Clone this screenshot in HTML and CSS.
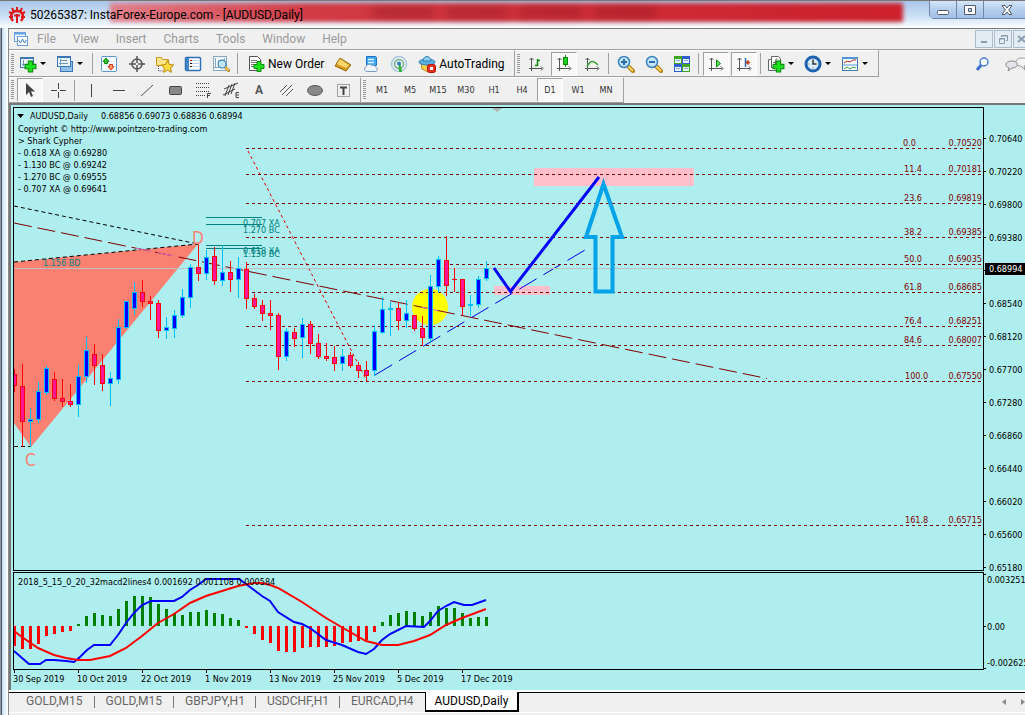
FILE: index.html
```html
<!DOCTYPE html>
<html lang="en">
<head>
    <meta charset="UTF-8">
    <meta name="viewport" content="width=device-width, initial-scale=1.0">
    <title>50265387: InstaForex-Europe.com - [AUDUSD,Daily]</title>
    <link rel="stylesheet" href="styles.css">
</head>
<body>
    <!-- Shared icon parts -->
    <svg class="defs" width="0" height="0">
        <symbol id="plus" viewBox="0 0 12 12">
            <path d="M4 1h4v3h3v4H8v3H4V8H1V4h3z" fill="#1fe01f" stroke="#0a8a0a"/>
        </symbol>
        <symbol id="lens" viewBox="0 0 18 18">
            <path d="M11 11l5 5" stroke="#a87a10" stroke-width="4" stroke-linecap="round"/>
            <path d="M11.500 11.500l4 4" stroke="#ffd75a" stroke-width="2" stroke-linecap="round"/>
            <circle cx="7" cy="7" r="5.500" fill="#c4e4f8" stroke="#3b82bd" stroke-width="1.500"/>
        </symbol>
        <symbol id="axes" viewBox="0 0 18 18">
            <path d="M4.500 16V3M2 13.500h13M2.500 5l2-2 2 2M14 11.500l2 2-2 2" fill="none" stroke="#555"/>
        </symbol>
    </svg>

    <div class="window">
        <header class="titlebar">
            <div class="glass"><i></i><i></i><i></i><i></i></div>
            <svg class="logo" width="18" height="18" viewBox="0 0 18 18">
                <path d="M5 15C1.500 11 3 5 9 5s7.500 6 4 10" fill="none" stroke="#e01a1a" stroke-width="2.500"/>
                <path d="M9 1v5M4 2l2 4M14 2l-2 4M1 6l4 2M17 6l-4 2M1 11h4M17 11h-4" stroke="#e01a1a" stroke-width="2"/>
                <path d="M9 8v9M6 9.500h6" stroke="#e01a1a" stroke-width="2"/>
            </svg>
            <h1>50265387: InstaForex-Europe.com - [AUDUSD,Daily]</h1>
            <div class="window-buttons">
                <button aria-label="Minimize"><svg width="14" height="12"><rect x="1.500" y="6.500" width="11" height="4" rx="1" fill="#fff" stroke="#555b66"/></svg></button>
                <button aria-label="Maximize"><svg width="14" height="12"><path d="M1.500 1.500h11v9h-11z M5.500 4.500h3v3h-3z" fill="#fff" fill-rule="evenodd" stroke="#555b66"/></svg></button>
                <button class="close" aria-label="Close"><svg width="14" height="12"><path d="M2 1.500h3l2 2.500 2-2.500h3L8.700 6l3.300 4.500H9L7 8l-2 2.500H2L5.300 6z" fill="#fff" stroke="#555b66"/></svg></button>
            </div>
        </header>

        <div class="client">
            <nav class="menubar">
                <svg width="16" height="16" viewBox="0 0 16 16">
                    <rect x="1.500" y="1.500" width="11" height="9" fill="#eef6ff" stroke="#6aa0e0"/>
                    <path d="M1 2.500h12" stroke="#6aa0e0" stroke-width="2"/>
                    <rect x="4.500" y="5.500" width="10" height="9" fill="#fff" stroke="#6aa0e0"/>
                    <path d="M5.500 9l2 3 2-4 2 4 2-3" fill="none" stroke="#3f7fd0"/>
                </svg>
                <a href="#">File</a>
                <a href="#">View</a>
                <a href="#">Insert</a>
                <a href="#">Charts</a>
                <a href="#">Tools</a>
                <a href="#">Window</a>
                <a href="#">Help</a>
                <div class="child-buttons">
                    <button aria-label="Minimize chart"><svg width="12" height="12"><path d="M3 9h6" stroke="#8a9db0" stroke-width="2"/></svg></button>
                    <button aria-label="Restore chart"><svg width="12" height="12"><path d="M4.500 4V2.500h6v5H9M4 3h7M2 6h6M2.500 5.500h5v5h-5z" fill="none" stroke="#8a9db0"/></svg></button>
                    <button aria-label="Close chart"><svg width="12" height="12"><path d="M2 3l7 6M9 3l-7 6" stroke="#8a9db0" stroke-width="2"/></svg></button>
                </div>
            </nav>

            <div class="toolbar">
                <div class="group">
                    <span class="grip"></span>
                    <button class="split" aria-label="New chart">
                        <svg width="18" height="18"><rect x="1.500" y="2.500" width="13" height="10" fill="#eaf4fc" stroke="#3b78b5"/><path d="M1 3h14" stroke="#3b78b5" stroke-width="2"/><path d="M4.500 5v6M3 9.500h8" stroke="#7097b8"/><use href="#plus" x="5" y="5" width="13" height="13"/></svg>
                        <i class="caret"></i>
                    </button>
                    <button class="split" aria-label="Profiles">
                        <svg width="18" height="18"><rect x="4.500" y="6.500" width="12" height="10" fill="#8fc0e8" stroke="#3b78b5"/><rect x="1.500" y="1.500" width="13" height="10" fill="#eaf4fc" stroke="#3b78b5"/><path d="M1 2h14" stroke="#3b78b5" stroke-width="2"/><path d="M4.500 4v6M3 8.500h9M4 5.500h7" stroke="#7097b8"/></svg>
                        <i class="caret"></i>
                    </button>
                    <span class="sep"></span>
                    <button aria-label="Market Watch">
                        <svg width="18" height="18"><rect x="1.500" y="1.500" width="15" height="15" rx="1" fill="#f4faff" stroke="#5b9bd0"/><path d="M6 3l3 3.500H7.500v2h-3v-2H3z" fill="#2fbf2f" stroke="#118a11"/><path d="M11 15l-3-3.500h1.500v-2h3v2H14z" fill="#ff9a6d" stroke="#d33a10"/></svg>
                    </button>
                    <button aria-label="Data Window">
                        <svg width="18" height="18" fill="none" stroke="#555"><circle cx="9" cy="9" r="5" stroke-width="1.500"/><path d="M9 1v7M9 10v7M1 9h7M10 9h7" stroke-width="1.500"/></svg>
                    </button>
                    <button aria-label="Navigator">
                        <svg width="20" height="18"><path d="M1.500 10.500v-8h5l1 2h6v6z" fill="#ffe58a" stroke="#c8981c"/><path d="M3.500 11v5h4" stroke="#555" stroke-dasharray="1 1" fill="none"/><path d="M12.500 5.500l2 4 4.300.5-3.200 3 .8 4.300-3.900-2.200-3.900 2.200.8-4.300-3.200-3 4.300-.5z" fill="#ffd83d" stroke="#b8860b"/></svg>
                    </button>
                    <button aria-label="Terminal">
                        <svg width="18" height="18"><rect x="1.500" y="2.500" width="15" height="13" rx="1" fill="#fff" stroke="#2f6fb5" stroke-width="1.500"/><rect x="2" y="3" width="3" height="12" fill="#3f86cc"/><path d="M7 5.500h8M7 8.500h8M7 11.500h8" stroke="#b9cee0"/><path d="M6 5.500h2" stroke="#e00"/><path d="M6 8.500h2M6 11.500h2" stroke="#111"/></svg>
                    </button>
                    <button aria-label="Strategy Tester">
                        <svg width="18" height="18"><rect x="1.500" y="1.500" width="13" height="14" fill="#f4f8fb" stroke="#8aa7c0"/><path d="M3.500 3v10M6.500 5v8M12.500 3v10M2 12.500h10" stroke="#8aa7c0"/><use href="#lens" x="5" y="4" width="13" height="13"/></svg>
                    </button>
                    <span class="sep"></span>
                    <button class="labelled">
                        <svg width="18" height="18"><path d="M2.500 1.500h8l3 3v11h-11z" fill="#fff" stroke="#555"/><path d="M4 5.500h6M4 7.500h7M4 9.500h5M4 11.500h4" stroke="#777"/><use href="#plus" x="6" y="5" width="12" height="13"/></svg>
                        New Order
                    </button>
                    <button aria-label="MetaEditor">
                        <svg width="18" height="18"><path d="M1 11l5-8 11 7-5 6z" fill="#d8981c" stroke="#9a6a08"/><path d="M3 9l3-5 9 6-3 3z" fill="#ffd66a"/></svg>
                    </button>
                    <button aria-label="Virtual hosting">
                        <svg width="18" height="18"><path d="M4.500 1.500h9l1 1v8h-10z" fill="#3fa9f0" stroke="#1c72c0"/><path d="M6 4.500h6M6 7.500h6" stroke="#d8f0ff" stroke-width="1.500"/><path d="M4 16.500a3 3 0 0 1 0-5 3.500 3.500 0 0 1 6-1 3 3 0 0 1 4 2 2.200 2.200 0 0 1 0 4z" fill="#eef4fb" stroke="#7f9cc0"/></svg>
                    </button>
                    <button aria-label="Signals">
                        <svg width="18" height="18" fill="none"><circle cx="9" cy="9" r="7.500" stroke="#a8c8dc" stroke-width="1.500"/><circle cx="9" cy="9" r="4.500" stroke="#6fae8f" stroke-width="1.500"/><path d="M8.500 9h2l1.500 8H9z" fill="#2fb02f"/><circle cx="9" cy="8.500" r="2" fill="#2f7fbf"/></svg>
                    </button>
                    <button class="labelled auto">
                        <svg width="18" height="18"><path d="M3 8l1 6 6 3 5-4V8z" fill="#ffd34a" stroke="#c28a10"/><ellipse cx="9" cy="7" rx="8" ry="3" fill="#5fb0e0" stroke="#2f7fb5"/><path d="M5 6a4 4.500 0 0 1 8 0z" fill="#8fd0f2" stroke="#2f7fb5"/><rect x="9.500" y="9.500" width="8" height="8" rx="2" fill="#e8301c" stroke="#b01808"/><rect x="12" y="12" width="3" height="3" fill="#fff"/></svg>
                        AutoTrading
                    </button>
                </div>
                <div class="group charting">
                    <span class="grip"></span>
                    <button aria-label="Bar chart">
                        <svg width="18" height="18"><use href="#axes" width="18" height="18"/><path d="M10.500 4v7M8 10.500h2M11 5.500h2" stroke="#0a8a0a" stroke-width="1.500"/></svg>
                    </button>
                    <button class="pressed" aria-label="Candlesticks">
                        <svg width="18" height="18"><use href="#axes" width="18" height="18"/><path d="M10.500 0v12" stroke="#0a8a0a"/><rect x="8.500" y="2.500" width="4" height="7" fill="#1fd01f" stroke="#0a8a0a"/></svg>
                    </button>
                    <button aria-label="Line chart">
                        <svg width="18" height="18"><use href="#axes" width="18" height="18"/><path d="M4 12c3-7 6-7 11-2" fill="none" stroke="#3aa03a" stroke-width="1.500"/></svg>
                    </button>
                    <span class="sep"></span>
                    <button aria-label="Zoom in">
                        <svg width="18" height="18"><use href="#lens" width="18" height="18"/><path d="M4 7h6M7 4v6" stroke="#2b6ca8" stroke-width="2"/></svg>
                    </button>
                    <button aria-label="Zoom out">
                        <svg width="18" height="18"><use href="#lens" width="18" height="18"/><path d="M4 7h6" stroke="#2b6ca8" stroke-width="2"/></svg>
                    </button>
                    <button aria-label="Tile windows">
                        <svg width="18" height="18"><path d="M1 1h8v8H1zM9 9h8v8H9z" fill="#3fa51c"/><path d="M9 1h8v8H9zM1 9h8v8H1z" fill="#2f5fd0"/><path d="M2 4h6v4H2zM10 4h6v4h-6zM2 12h6v4H2zM10 12h6v4h-6z" fill="#e8f2fa"/><path d="M3 5.500h4M11 5.500h4M3 13.500h4M11 13.500h4" stroke="#8fb0cf"/></svg>
                    </button>
                    <span class="sep"></span>
                    <button class="pressed" aria-label="Auto scroll">
                        <svg width="18" height="18"><use href="#axes" width="18" height="18"/><path d="M9.500 5v7l4-3.500z" fill="#5fe05f" stroke="#0a8a0a"/></svg>
                    </button>
                    <button class="pressed" aria-label="Chart shift">
                        <svg width="18" height="18"><use href="#axes" width="18" height="18"/><path d="M10.500 3v9" stroke="#2b6cb8" stroke-width="1.500"/><path d="M15 7.500h-4M13.500 5.500l-2 2 2 2" fill="none" stroke="#c03a10" stroke-width="1.500"/></svg>
                    </button>
                    <span class="sep"></span>
                    <button class="split" aria-label="Indicators">
                        <svg width="18" height="18"><path d="M4.500 1.500h7l2 2v9h-9zM1.500 4.500h3v8h6v3h-9z" fill="#fff" stroke="#666"/><path d="M10.500 4c-2 0-2 0-2 7M6.500 7.500h4" stroke="#555" fill="none"/><use href="#plus" x="5" y="5" width="13" height="13"/></svg>
                        <i class="caret"></i>
                    </button>
                    <button class="split" aria-label="Periods">
                        <svg width="18" height="18"><circle cx="9" cy="9" r="7" fill="#d8ecfa" stroke="#1c62b0" stroke-width="3"/><path d="M9 4.500V9h3.500" fill="none" stroke="#333" stroke-width="1.500"/><path d="M4.500 9h1M9 12.500v1" stroke="#666"/></svg>
                        <i class="caret"></i>
                    </button>
                    <button class="split" aria-label="Templates">
                        <svg width="18" height="18"><rect x="1.500" y="2.500" width="15" height="13" fill="#fff" stroke="#3b78b5"/><path d="M1 3h16" stroke="#4f96d8" stroke-width="2"/><path d="M2 10h14" stroke="#4f96d8"/><path d="M3 8l3-2 3 1 3-2h3" fill="none" stroke="#a03020"/><path d="M3 14l3-2 3 2 3-2 3 1" fill="none" stroke="#2f9f3f"/></svg>
                        <i class="caret"></i>
                    </button>
                </div>
                <div class="tool-end">
                    <button aria-label="Search">
                        <svg width="16" height="16"><path d="M2 14l5-6" stroke="#3f6fd0" stroke-width="3"/><circle cx="9" cy="6" r="4" fill="#f4faff" stroke="#4f7fd8" stroke-width="1.500"/></svg>
                    </button>
                    <button aria-label="Chat">
                        <svg width="28" height="18"><path d="M18 11l4 4-1-4c6-1 6-8-2-8-7 0-8 6-3 8z" fill="#f4f4f4" stroke="#999"/><path d="M6 13l-1 3 4-3c7 0 7-7 0-7s-8 5-3 7z" fill="#e4e4ea" stroke="#888"/></svg>
                    </button>
                </div>
            </div>

            <div class="toolbar drawing">
                <div class="group">
                    <span class="grip"></span>
                    <button class="pressed" aria-label="Cursor"><svg width="18" height="18"><path d="M5 2v12l3-3 2 5 2-1-2-4.500h4z" fill="#444"/></svg></button>
                    <button aria-label="Crosshair"><svg width="18" height="18"><path d="M9.500 2v6M9.500 11v6M2 9.500h6M11 9.500h6" stroke="#444"/></svg></button>
                    <span class="sep"></span>
                    <button aria-label="Vertical line"><svg width="18" height="18"><path d="M9.500 3v13" stroke="#444"/></svg></button>
                    <button aria-label="Horizontal line"><svg width="18" height="18"><path d="M3 9.500h12" stroke="#444"/></svg></button>
                    <button aria-label="Trendline"><svg width="18" height="18"><path d="M3 15L15 4" stroke="#555"/></svg></button>
                    <button aria-label="Rectangle"><svg width="18" height="18"><rect x="3.500" y="5.500" width="12" height="8" rx="1" fill="#888" stroke="#444"/></svg></button>
                    <button aria-label="Fibonacci"><svg width="18" height="18"><path d="M2 2.500h14M2 6.500h14M2 10.500h14M2 14.500h9" stroke="#444" stroke-dasharray="1 1"/><path d="M13.500 17v-4.500H17M13 14.500h3" fill="none" stroke="#444"/></svg></button>
                    <button aria-label="Channel"><svg width="18" height="18"><path d="M2 8l14-6M1 14l12-6M3 15L7 4M6 14L10 3M9 13L13 2" stroke="#444"/><path d="M17 11.500h-3v5h3M14 14h3" fill="none" stroke="#444"/></svg></button>
                    <button class="letter">A</button>
                    <button aria-label="Parallel lines"><svg width="18" height="18"><path d="M2 11l7-7M4 14L14 4M8 15l7-7" stroke="#555"/></svg></button>
                    <button aria-label="Ellipse"><svg width="18" height="18"><ellipse cx="9" cy="9.500" rx="7.500" ry="5" fill="#888" stroke="#555"/></svg></button>
                    <button aria-label="Text label"><svg width="18" height="18"><rect x="3.500" y="3.500" width="12" height="12" fill="none" stroke="#555" stroke-dasharray="1 1"/><path d="M6 6.500h7M9.500 6v8" stroke="#444" stroke-width="2"/></svg></button>
                </div>
                <div class="group periods">
                    <span class="grip"></span>
                    <button>M1</button>
                    <button>M5</button>
                    <button>M15</button>
                    <button>M30</button>
                    <button>H1</button>
                    <button>H4</button>
                    <button class="pressed">D1</button>
                    <button>W1</button>
                    <button>MN</button>
                </div>
            </div>

            <main class="chart">
                <svg id="price" class="plot price-plot">
                    <g transform="translate(-14 -108)">
                        <path d="M492 108h10l-5 4z" fill="#b0b0b0"/>
                        <!-- zones and pattern -->
                        <path d="M14 262L198 244 31 447 14 423z" fill="#fa8072"/>
                        <rect x="534" y="168" width="160" height="18" fill="#ffc0cb"/>
                        <rect x="494" y="286" width="56" height="9" fill="#ffc0cb"/>
                        <circle cx="430" cy="307" r="18" fill="#ff0"/>
                        <g fill="none" stroke="#000" stroke-dasharray="4 3">
                            <path d="M14 206L198 244"/>
                            <path d="M14 262L198 244"/>
                            <path d="M14 446.500h16"/>
                        </g>
                        <path d="M14 223L767 378.500" stroke="#800000" stroke-dasharray="18 6"/>
                        <path d="M136 248.200L176 256.500M422 307.300L446 312.300" stroke="#e070c0" stroke-dasharray="16 6"/>
                        <path d="M248 151L367 381" stroke="#e00000" stroke-dasharray="3 3"/>
                        <path d="M375 375L585 250" stroke="#0000e0" stroke-dasharray="20 8"/>
                        <path d="M206 217.500h56M206 224.500h56M206 245.500h56M206 248.500h56" stroke="#008080"/>
                        <g fill="#008080">
                            <text x="243" y="226">0.707 XA</text>
                            <text x="243" y="233">1.270 BC</text>
                            <text x="243" y="254">0.618 XA</text>
                            <text x="243" y="257">1.130 BC</text>
                            <text x="43" y="266">1.156 BD</text>
                        </g>
                        <text class="point" x="192" y="244">D</text>
                        <text class="point" x="25" y="466">C</text>
                        <!-- quote and pattern legend -->
                        <path d="M17 114h7l-3.500 4z"/>
                        <text x="30" y="119">AUDUSD,Daily</text>
                        <text x="101" y="119">0.68856 0.69073 0.68836 0.68994</text>
                        <text x="18" y="132">Copyright © http://www.pointzero-trading.com</text>
                        <text x="18" y="144">&gt; Shark Cypher</text>
                        <text x="18" y="156">- 0.618 XA @ 0.69280</text>
                        <text x="18" y="168">- 1.130 BC @ 0.69242</text>
                        <text x="18" y="180">- 1.270 BC @ 0.69555</text>
                        <text x="18" y="192">- 0.707 XA @ 0.69641</text>
                    </g>
                    <g id="levels"></g>
                    <g id="candles"></g>
                    <g transform="translate(-14 -108)" fill="none">
                        <path d="M494 268l16.500 23.500L599 177" stroke="#00f" stroke-width="3"/>
                        <path d="M603.500 184L622 237h-9.500v54.500h-17V237H586z" stroke="#00a2e8" stroke-width="4"/>
                    </g>
                </svg>
                <svg id="price-axis" class="axis price-plot"></svg>
                <svg class="plot macd-plot">
                    <g id="histogram"></g>
                    <g transform="translate(-14 -573)">
                        <g fill="none" stroke-width="2">
                            <path stroke="#00f" d="M14 651L22 658 29 664H40L46 660H54L66 661 74 662 80 657 87 650 94 645H110L118 635 126 623 134 613 142 605 151 601H174L182 597 190 590 198 585 206 579H239L246 584 254 590 262 596 270 601 278 612 294 622 302 624 310 628 326 640 342 645 358 652 366 654 374 649 382 640 390 634 406 626 424 627 430 621 438 611 446 606 454 602 464 605H472L486 600"/>
                            <path stroke="#f00" d="M14 631L22 637 38 648 54 655 66 658 78 660H90L110 656 126 648 142 636 158 623 174 614 190 603 206 596 222 591 238 586 254 583H262L270 585 278 588 302 602 326 618 350 632 366 641 382 645H398L414 641 430 635 446 625 462 618 486 609"/>
                        </g>
                        <text x="18" y="585">2018_5_15_0_20_32macd2lines4 0.001692 0.001108 0.000584</text>
                    </g>
                </svg>
                <svg class="axis macd-plot">
                    <path d="M0 2.500h2M0 54.500h2M0 96.500h2" stroke="#000"/>
                    <text x="3" y="11">0.003251</text>
                    <text x="3" y="58">0.00</text>
                    <text x="3" y="94">-0.002625</text>
                </svg>
                <div class="dates">
                    <span>30 Sep 2019</span>
                    <span>10 Oct 2019</span>
                    <span>22 Oct 2019</span>
                    <span>1 Nov 2019</span>
                    <span>13 Nov 2019</span>
                    <span>25 Nov 2019</span>
                    <span>5 Dec 2019</span>
                    <span>17 Dec 2019</span>
                </div>
            </main>

            <nav class="tabs">
                <a href="#">GOLD,M15</a>
                <a href="#">GOLD,M15</a>
                <a href="#">GBPJPY,H1</a>
                <a href="#">USDCHF,H1</a>
                <a href="#">EURCAD,H4</a>
                <a href="#" class="active">AUDUSD,Daily</a>
                <div class="tab-scroll">
                    <button aria-label="Previous tab"><svg width="4" height="6"><path d="M4 0v6L0 3z" fill="#888"/></svg></button>
                    <button aria-label="Next tab"><svg width="4" height="6"><path d="M0 0v6l4-3z" fill="#888"/></svg></button>
                </div>
            </nav>
        </div>
    </div>

    <script src="chart.js"></script>
</body>
</html>
```
FILE: styles.css
```css
* {
    margin: 0;
    padding: 0;
    box-sizing: border-box;
}

body {
    font-family: Roboto, "Liberation Sans", sans-serif;
    font-size: 12px;
    color: #000;
    background: #f0f0f0;
    overflow: hidden;
}

.defs {
    position: absolute;
}

svg {
    flex: none;
}

button {
    font: inherit;
    color: inherit;
    background: none;
    border: 0;
    display: flex;
    align-items: center;
    justify-content: center;
    flex: none;
}

a {
    color: inherit;
    text-decoration: none;
}

.window {
    min-height: 100vh;
    display: flex;
    flex-direction: column;
    background: linear-gradient(90deg, #8c98a6 0, #8c98a6 1px, #4d5560 1px, #4d5560 2px, #c8dcf0 2px, #e4f4fb 5px, #fff 8px, #9a9a9a 8px);
}

/* title bar */
.titlebar {
    position: relative;
    height: 28px;
    display: flex;
    align-items: center;
    padding-left: 8px;
    overflow: hidden;
    border-top: 1px solid #777;
    background: linear-gradient(#a9c6ea, #cfe2f6 60%, #fff);
}

.titlebar > * {
    position: relative;
}

.titlebar .glass {
    position: absolute;
    left: 110px;
    right: 122px;
    top: 2px;
    height: 19px;
    display: flex;
    align-items: center;
    gap: 12px;
    padding-left: 262px;
    background: linear-gradient(90deg, #e2808a, #d23a44 25%, #cc202b);
    filter: blur(2px);
}

.glass i {
    width: 62px;
    height: 9px;
    background: #8c1820;
    opacity: 0.5;
    filter: blur(4px);
}

h1 {
    font-size: 12px;
    font-weight: normal;
    margin-left: 4px;
    flex: 1;
}

.window-buttons {
    display: flex;
    align-self: flex-start;
    margin-right: -6px;
    border: 1px solid #6f87a5;
    border-top: 0;
    border-radius: 0 0 5px 5px;
}

.window-buttons button {
    width: 27px;
    height: 17px;
    border-right: 1px solid #6f87a5;
    background: linear-gradient(#d5e5f7, #b4cfee 50%, #a2c0e6);
}

.window-buttons .close {
    width: 46px;
    border-right: 0;
}

/* menu */
.client {
    flex: 1;
    margin-left: 8px;
    display: flex;
    flex-direction: column;
    border-left: 1px solid #8a8a8a;
    background: #f0f0f0;
    overflow: hidden;
}

.menubar {
    height: 22px;
    display: flex;
    align-items: center;
    padding-left: 4px;
    color: #9a9a9a;
    border-top: 1px solid #777;
    border-bottom: 1px solid #a0a0a0;
}

.menubar a {
    padding: 0 9px 0 8px;
}

.child-buttons {
    display: flex;
    gap: 1px;
    margin-left: auto;
    margin-right: -6px;
}

.child-buttons button {
    width: 18px;
    height: 18px;
    background: #e3ebf3;
    border: 1px solid #a9bccd;
}

/* toolbars */
.toolbar {
    height: 27px;
    display: flex;
}

.toolbar.drawing {
    height: 26px;
}

.group {
    display: flex;
    align-items: center;
    padding: 0 3px 0 2px;
    border-top: 1px solid #fff;
    border-right: 1px solid #a0a0a0;
    border-bottom: 1px solid #a0a0a0;
}

.grip {
    width: 3px;
    height: 20px;
    margin-right: 2px;
    background: repeating-linear-gradient(#999 0, #999 1px, #f0f0f0 1px, #f0f0f0 2px);
}

.sep {
    width: 1px;
    height: 21px;
    margin: 0 2px;
    background: #a0a0a0;
}

.charting .sep {
    margin-right: 3px;
}

.group button {
    width: 28px;
    height: 24px;
}

.group .split {
    width: 37px;
    gap: 3px;
    padding-left: 3px;
    justify-content: flex-start;
}

.group .labelled {
    width: auto;
    gap: 3px;
    padding: 0 5px 0 7px;
}

.group .auto {
    padding: 0 6px 0 5px;
}

.caret {
    border: 3px solid transparent;
    border-top-color: #000;
    border-bottom: 0;
}

.group .pressed {
    width: 26px;
    margin: 0 1px;
    border: 1px solid #a0a0a0;
    border-right-color: #fff;
    border-bottom-color: #fff;
    background: #f8f8f8;
}

.letter {
    font-weight: bold;
    color: #555;
}

.periods button {
    font-family: "DejaVu Sans Condensed", "DejaVu Sans", sans-serif;
    font-size: 9px;
    color: #333;
}

.tool-end {
    display: flex;
    gap: 12px;
    margin-left: auto;
    margin-right: -6px;
}

/* chart */
.chart {
    display: grid;
    grid-template-columns: minmax(0, 1fr) 41px;
    row-gap: 1px;
    padding: 2px 0 0 2px;
    border-top: 2px solid #777;
    border-left: 2px solid #777;
    background: #afeeee;
    font-family: "DejaVu Sans Condensed", "DejaVu Sans", sans-serif;
    font-size: 9px;
}

.plot {
    width: 100%;
    border: 1px solid #000;
}

.price-plot {
    height: 464px;
}

.macd-plot {
    height: 98px;
}

.axis {
    width: 100%;
}

.point {
    font-size: 17px;
    fill: #fa8072;
}

.fib {
    fill: #800000;
}

.dates {
    display: flex;
    height: 20px;
    margin-top: -1px;
}

.dates span {
    flex: none;
    width: 64px;
    padding-top: 4px;
    white-space: nowrap;
    background: linear-gradient(#000, #000) 1px 0 / 1px 3px no-repeat;
}

/* chart tabs */
.tabs {
    display: flex;
    height: 23px;
    padding-left: 6px;
    color: #666;
    border-top: 2px solid #fff;
    border-bottom: 1px solid #fff;
    box-shadow: inset 0 1px #000;
}

.tabs a {
    padding: 2px 11px 0;
    background: linear-gradient(#777, #777) right 4px / 1px 12px no-repeat;
}

.tabs a:nth-child(-n+2) {
    padding-right: 12px;
}

.tabs a:nth-child(5) {
    background: none;
}

.tabs .active {
    color: #000;
    padding: 2px 9px 0;
    background: #fff;
    border: 1px solid #000;
    border-top: 0;
    border-right-width: 2px;
    border-bottom-width: 2px;
}

.tab-scroll {
    display: flex;
    gap: 15px;
    margin-left: auto;
}
```
FILE: chart.js
```js
const NS = 'http://www.w3.org/2000/svg';
const STEP = 8;
const PRICE_TOP = 108;
const MACD_TOP = 573;

// [high, body top, body bottom, low, up]
const candles = [
    [369, 374, 386, 392, 0], [364, 386, 422, 447, 0], [409, 419, 422, 447, 1], [382, 391, 420, 423, 1],
    [366, 368, 393, 395, 1], [372, 379, 399, 401, 0], [379, 398, 402, 407, 0], [384, 401, 405, 407, 0],
    [365, 376, 405, 417, 1], [337, 350, 377, 383, 1], [344, 354, 366, 385, 0], [354, 365, 384, 391, 0],
    [372, 378, 384, 406, 1], [319, 327, 380, 384, 1], [301, 301, 328, 329, 1], [282, 292, 309, 315, 1],
    [280, 292, 302, 307, 0], [296, 301, 304, 320, 0], [300, 303, 331, 338, 0], [317, 327, 331, 339, 1],
    [310, 315, 329, 338, 1], [289, 297, 316, 318, 1], [264, 267, 298, 308, 1], [244, 267, 274, 281, 0],
    [250, 257, 274, 280, 1], [247, 256, 281, 285, 0], [245, 272, 281, 286, 1], [261, 272, 280, 292, 0],
    [257, 268, 280, 298, 1], [262, 269, 299, 309, 0], [294, 298, 307, 309, 0], [300, 305, 314, 321, 0],
    [300, 313, 316, 330, 0], [313, 315, 357, 370, 0], [328, 331, 357, 361, 1], [328, 332, 339, 347, 0],
    [318, 324, 338, 358, 1], [321, 324, 344, 354, 0], [334, 343, 357, 359, 0], [343, 356, 359, 361, 0],
    [346, 357, 364, 371, 0], [349, 356, 364, 371, 1], [352, 355, 366, 368, 0], [362, 365, 371, 378, 0],
    [361, 370, 376, 381, 0], [325, 331, 371, 376, 1], [297, 309, 333, 334, 1], [302, 308, 310, 336, 1],
    [302, 308, 321, 330, 0], [300, 313, 321, 328, 1], [315, 315, 329, 331, 0], [316, 328, 338, 346, 0],
    [275, 286, 339, 342, 1], [256, 259, 287, 293, 1], [236, 260, 286, 296, 0], [268, 279, 280, 292, 0],
    [279, 279, 307, 316, 0], [295, 304, 306, 316, 1], [276, 279, 305, 308, 1], [261, 268, 279, 281, 1]
];

const macd = [
    646, 649, 649, 644, 636, 634, 632, 631, 624, 616, 613, 615, 616, 609, 601, 596, 596, 597, 604, 609,
    613, 615, 612, 612, 610, 613, 614, 618, 620, 628, 634, 640, 643, 651, 652, 652, 648, 647, 647, 647,
    646, 643, 642, 641, 640, 632, 622, 615, 613, 611, 612, 616, 612, 606, 608, 608, 613, 618, 617, 617
];

const levels = [
    [148, '0.0', '0.70520'], [174, '11.4', '0.70181'], [203, '23.6', '0.69819'], [237, '38.2', '0.69385'],
    [264, '50.0', '0.69035'], [292, '61.8', '0.68685'], [326, '76.4', '0.68251'], [345, '84.6', '0.68007'],
    [381, '100.0', '0.67550'], [525, '161.8', '0.65715']
];

function add(parent, tag, attrs, text) {
    const el = document.createElementNS(NS, tag);
    for (const key in attrs) el.setAttribute(key, attrs[key]);
    if (text) el.textContent = text;
    parent.appendChild(el);
    return el;
}

function box(parent, x, y, width, height, fill) {
    add(parent, 'rect', { x, y, width, height, fill });
}

// Fibonacci levels, labels hang off the right edge of the plot
const levelGroup = document.getElementById('levels');
levels.forEach(([y, ratio, price]) => {
    const top = y - PRICE_TOP;
    add(levelGroup, 'line', {
        x1: 232, x2: '100%', y1: top + 0.5, y2: top + 0.5, stroke: '#800000', 'stroke-dasharray': '3 3'
    });
    const shift = ratio === '0.0' ? -80 : ratio.length > 4 ? -78 : -79;
    add(levelGroup, 'text', { class: 'fib', x: '100%', y: top - 2, dx: shift }, ratio);
    add(levelGroup, 'text', { class: 'fib', x: '100%', y: top - 2, dx: -1, 'text-anchor': 'end' }, price);
});
box(levelGroup, 0, 268 - PRICE_TOP, '100%', 1, '#c0c0c0');

const candleGroup = document.getElementById('candles');
candles.forEach(([high, top, bottom, low, up], i) => {
    const x = i * STEP;
    const edge = up ? '#00bfff' : '#ff0000';
    box(candleGroup, x, high - PRICE_TOP, 1, low - high, edge);
    box(candleGroup, x - 2, top - PRICE_TOP, 5, bottom - top, edge);
    if (bottom - top > 2) {
        box(candleGroup, x - 1, top - PRICE_TOP + 1, 3, bottom - top - 2, up ? '#0000ff' : '#ff1493');
    }
});

const histogram = document.getElementById('histogram');
macd.forEach((y, i) => {
    const zero = 626;
    box(histogram, i * STEP - 1, Math.min(y, zero) - MACD_TOP, 3, Math.abs(y - zero), y > zero ? '#ff0000' : '#008000');
});

// Price scale
const axis = document.getElementById('price-axis');
for (let i = 0; i < 14; i++) {
    const y = 31 + i * 33;
    box(axis, 0, y, 2, 1, '#000');
    if (i !== 4) add(axis, 'text', { x: 5, y: y + 4 }, (0.7064 - i * 0.0042).toFixed(5));
}
box(axis, 1, 156, 40, 12, '#000');
add(axis, 'text', { x: 5, y: 165, fill: '#fff' }, '0.68994');
```
